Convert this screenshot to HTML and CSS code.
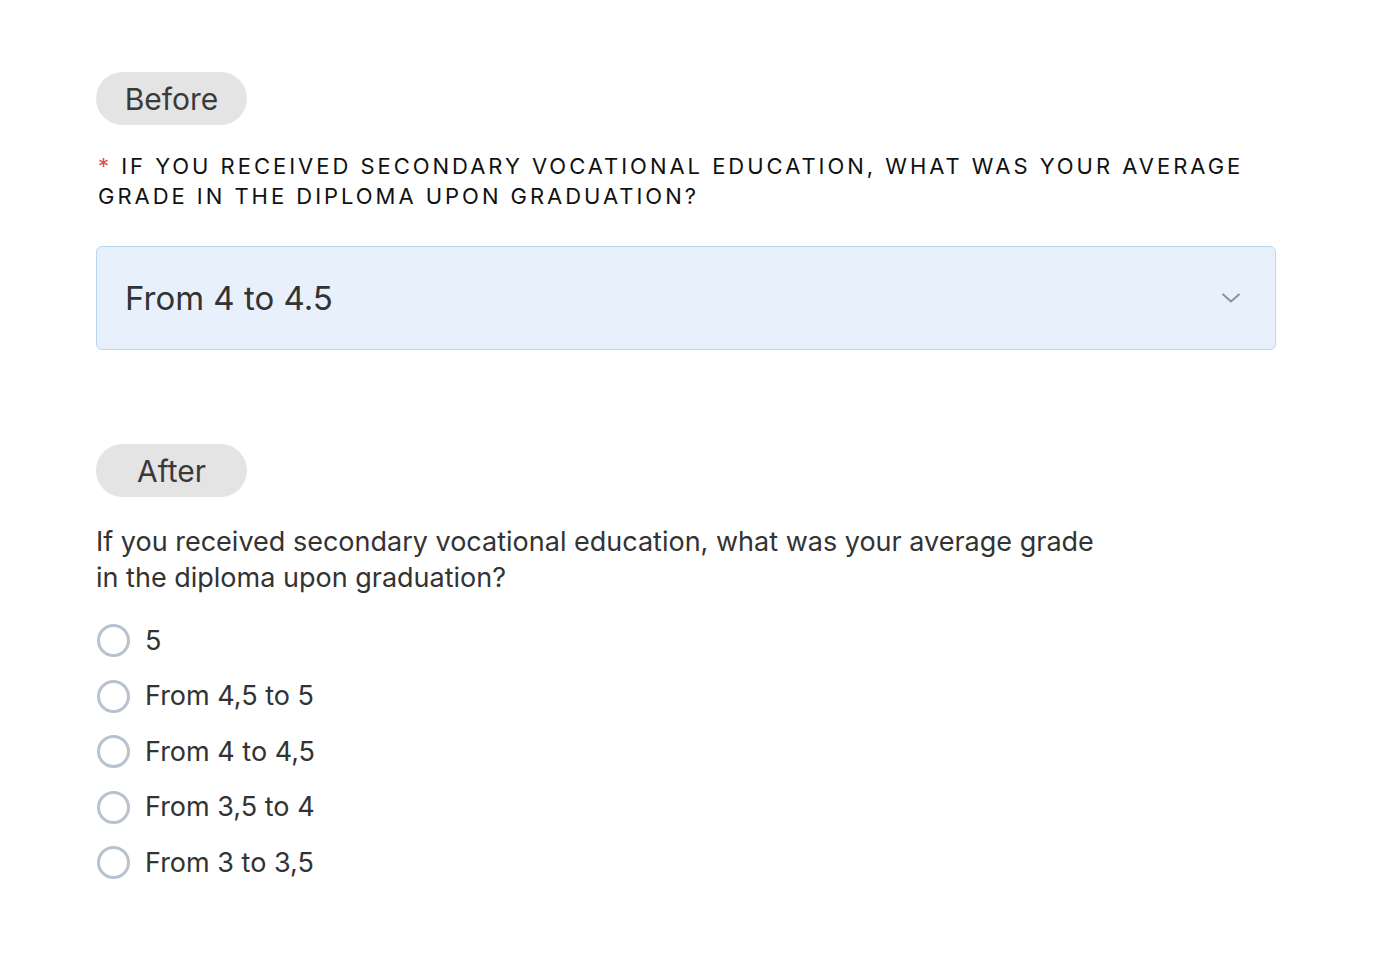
FILE: index.html
```html
<!DOCTYPE html>
<html lang="en">
<head>
  <meta charset="UTF-8" />
  <title>Before / After</title>
  <link rel="stylesheet" href="styles.css">
</head>
<body>
  <div class="page">
    <section class="block">
      <span class="tag">Before</span>
      <div class="old-label"><span class="req">*</span> IF YOU RECEIVED SECONDARY VOCATIONAL EDUCATION, WHAT WAS YOUR AVERAGE GRADE IN THE DIPLOMA UPON GRADUATION?</div>
      <div class="select">
        <span class="select-value">From 4 to 4.5</span>
        <svg class="chevron" width="20" height="12" viewBox="0 0 20 12">
          <path d="M1.5 2 L10 9.5 L18.5 2" fill="none" stroke="#8a9099" stroke-width="2" />
        </svg>
      </div>
    </section>

    <section class="block after">
      <span class="tag">After</span>
      <div class="new-label">If you received secondary vocational education, what was your average grade in the diploma upon graduation?</div>
      <div class="options">
        <label class="option"><span class="radio"></span>5</label>
        <label class="option"><span class="radio"></span>From 4,5 to 5</label>
        <label class="option"><span class="radio"></span>From 4 to 4,5</label>
        <label class="option"><span class="radio"></span>From 3,5 to 4</label>
        <label class="option"><span class="radio"></span>From 3 to 3,5</label>
      </div>
    </section>
  </div>
</body>
</html>
```

FILE: styles.css
```css
body {
  margin: 0;
  background: #fff;
  font-family: Inter, "Noto Sans", sans-serif;
  color: #333;
}
.page {
  padding: 72px 98px 0 96px;
}
.block {
  display: flex;
  flex-direction: column;
  align-items: flex-start;
}
.after {
  margin-top: 94px;
}
.tag {
  display: flex;
  align-items: center;
  justify-content: center;
  width: 151px;
  height: 53px;
  border-radius: 27px;
  background: #e4e4e4;
  font-size: 30px;
  color: #3a3a3a;
}
.old-label {
  margin-top: 26px;
  padding-left: 2px;
  font-size: 22px;
  line-height: 30px;
  letter-spacing: 2.97px;
  color: #111;
  max-width: 1170px;
}
.req {
  color: #e5484d;
}
.select {
  margin-top: 35px;
  box-sizing: border-box;
  width: 1180px;
  height: 104px;
  display: flex;
  align-items: center;
  justify-content: space-between;
  padding: 0 34px 0 28px;
  background: #e8f1fb;
  border: 1.5px solid #b9d7f2;
  border-radius: 6px;
}
.select-value {
  font-size: 33px;
  color: #333;
}
.new-label {
  margin-top: 27px;
  max-width: 1010px;
  font-size: 27px;
  line-height: 36px;
  color: #333;
}
.options {
  margin-top: 28px;
  display: flex;
  flex-direction: column;
  gap: 22.5px;
}
.option {
  display: flex;
  align-items: center;
  gap: 15px;
  font-size: 27px;
  line-height: 32px;
  color: #333;
}
.radio {
  box-sizing: border-box;
  width: 33px;
  height: 33px;
  border: 3px solid #b9c3d0;
  border-radius: 50%;
  margin-left: 1px;
}
```
